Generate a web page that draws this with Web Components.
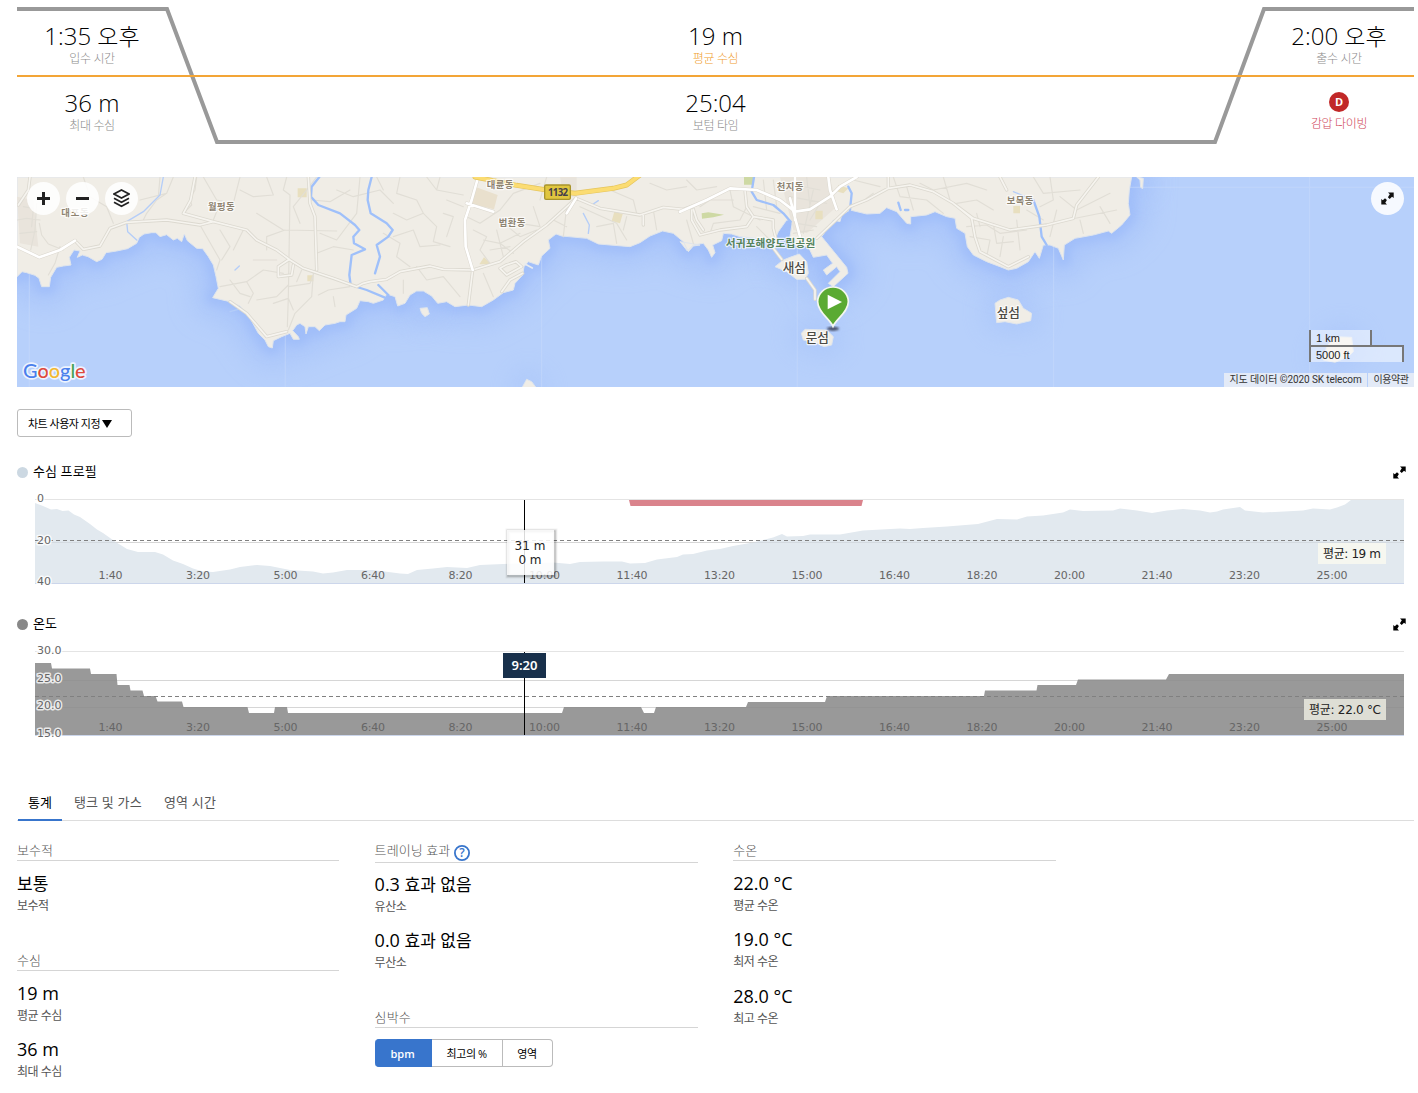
<!DOCTYPE html>
<html lang="ko">
<head>
    <meta charset="UTF-8">
    <meta name="viewport" content="width=device-width, initial-scale=1.0">
    <title>Web Component: Dive Activity</title>
    <style>
        body {
            margin: 0;
            background: #fff;
            color: #000;
            font-family: "Open Sans", "Noto Sans CJK KR", sans-serif;
        }
    </style>
</head>
<body>
    <dive-page>
        <dive-summary>
            <summary-value slot="start" value="1:35 오후" label="입수 시간"></summary-value>
            <summary-value slot="average" value="19 m" label="평균 수심" tone="accent"></summary-value>
            <summary-value slot="end" value="2:00 오후" label="출수 시간"></summary-value>
            <summary-value slot="max" value="36 m" label="최대 수심"></summary-value>
            <summary-value slot="bottom" value="25:04" label="보텀 타임"></summary-value>
            <summary-value slot="type" badge="D" label="감압 다이빙" tone="deco"></summary-value>
        </dive-summary>
        <dive-map></dive-map>
        <menu-button>차트 사용자 지정</menu-button>
        <dive-chart kind="depth">수심 프로필</dive-chart>
        <dive-chart kind="temperature">온도</dive-chart>
        <tab-bar>
            <tab-item active>통계</tab-item>
            <tab-item>탱크 및 가스</tab-item>
            <tab-item>영역 시간</tab-item>
        </tab-bar>
        <stat-columns>
            <stat-column>
                <stat-group heading="보수적">
                    <stat-item value="보통" label="보수적"></stat-item>
                </stat-group>
                <stat-group heading="수심">
                    <stat-item value="19 m" label="평균 수심"></stat-item>
                    <stat-item value="36 m" label="최대 수심"></stat-item>
                </stat-group>
            </stat-column>
            <stat-column>
                <stat-group heading="트레이닝 효과" help>
                    <stat-item value="0.3 효과 없음" label="유산소"></stat-item>
                    <stat-item value="0.0 효과 없음" label="무산소"></stat-item>
                </stat-group>
                <stat-group heading="심박수">
                    <button-group options="bpm,최고의 %,영역"></button-group>
                </stat-group>
            </stat-column>
            <stat-column>
                <stat-group heading="수온">
                    <stat-item value="22.0 °C" label="평균 수온"></stat-item>
                    <stat-item value="19.0 °C" label="최저 수온"></stat-item>
                    <stat-item value="28.0 °C" label="최고 수온"></stat-item>
                </stat-group>
            </stat-column>
        </stat-columns>
    </dive-page>

    <script>
        // Wraps every run of Hangul, so it can be sized apart from the digits
        const hangul = (text) => text.replace(/[가-힣]+(?: [가-힣]+)*/g, '<span class="ko">$&</span>');

        /**
         * Page frame: stacks the sections.
         */
        class DivePage extends HTMLElement {
            constructor() {
                super();
                this.attachShadow({ mode: 'open' }).innerHTML = `
                    <style>
                        :host {
                            display: flex;
                            flex-direction: column;
                            box-sizing: border-box;
                            height: 1093px;
                            padding: 7px 4px 0 17px;
                            overflow: hidden;
                        }
                        ::slotted(*) { flex: none; }
                    </style>
                    <slot></slot>
                `;
            }
        }
        customElements.define('dive-page', DivePage);

        /**
         * One value with its caption in the summary header.
         */
        class SummaryValue extends HTMLElement {
            constructor() {
                super();
                this.attachShadow({ mode: 'open' });
            }

            connectedCallback() {
                const badge = this.getAttribute('badge');
                this.shadowRoot.innerHTML = `
                    <style>
                        :host { display: flex; flex-direction: column; align-items: center; }
                        .value {
                            margin-top: 11px;
                            height: 32px;
                            font-size: 24px;
                            line-height: 32px;
                            font-weight: 300;
                            white-space: nowrap;
                        }
                        .value .ko { font-size: 23px; }
                        .label {
                            height: 16px;
                            margin-top: -1px;
                            font-size: 12px;
                            line-height: 16px;
                            font-weight: 200;
                            letter-spacing: -0.35px;
                            color: #8c8c8c;
                        }
                        .badge {
                            width: 20px;
                            height: 20px;
                            margin: 16px 0 5px;
                            border-radius: 50%;
                            background: #c12828;
                            color: #fff;
                            font-size: 11px;
                            line-height: 20px;
                            font-weight: 700;
                            text-align: center;
                        }
                        :host([tone="accent"]) .label { color: #f0a030; }
                        :host([tone="deco"]) .label { color: #cf4558; }
                    </style>
                    ${badge ? `<div class="badge">${badge}</div>` : `<div class="value">${hangul(this.getAttribute('value'))}</div>`}
                    <div class="label">${this.getAttribute('label')}</div>
                `;
            }
        }
        customElements.define('summary-value', SummaryValue);

        /**
         * Summary header with the dive outline behind the values.
         */
        class DiveSummary extends HTMLElement {
            constructor() {
                super();
                this.attachShadow({ mode: 'open' }).innerHTML = `
                    <style>
                        :host { display: block; position: relative; height: 137px; margin-bottom: 33px; }
                        svg { position: absolute; left: 0; top: 0; }
                        .grid {
                            position: relative;
                            display: grid;
                            grid-template-columns: 150px 1fr 150px;
                            grid-template-rows: 67px 67px;
                            padding-top: 2px;
                        }
                    </style>
                    <svg width="1397" height="137" fill="none">
                        <path d="M0 2H150L200 135H1198L1247 2H1397" stroke="#999" stroke-width="4"/>
                        <path d="M0 69H1397" stroke="#f3a536" stroke-width="2"/>
                    </svg>
                    <div class="grid">
                        <slot name="start"></slot>
                        <slot name="average"></slot>
                        <slot name="end"></slot>
                        <slot name="max"></slot>
                        <slot name="bottom"></slot>
                        <slot name="type"></slot>
                    </div>
                `;
            }
        }
        customElements.define('dive-summary', DiveSummary);

        /**
         * Icons shared by the map controls and the charts.
         */
        const ICONS = {
            plus: '<path d="M5 0h3v5h5v3H8v5H5V8H0V5h5z"/>',
            minus: '<path d="M0 5h13v3H0z"/>',
            layers: '<path d="M8.500 1L16 5 8.500 9 1 5zM1 9.200l7.500 4 7.500-4M1 13.200l7.500 4 7.500-4" fill="none" stroke="currentColor" stroke-width="1.700"/>',
            expand: '<path d="M7 .500H12.700V6L11 4.700 8.700 7 6.900 5.200 8.800 2.200zM.300 7l1.500 1.200L4 6.200 5.900 8 4.300 10.700 6 12.500H.300z"/>',
        };

        class AppIcon extends HTMLElement {
            constructor() {
                super();
                this.attachShadow({ mode: 'open' });
            }

            connectedCallback() {
                const name = this.getAttribute('name');
                const size = name === 'layers' ? [17, 19] : [13, 13];
                this.shadowRoot.innerHTML = `
                    <style>
                        :host { display: inline-flex; }
                        svg { display: block; }
                    </style>
                    <svg width="${size[0]}" height="${size[1]}" fill="currentColor">${ICONS[name]}</svg>
                `;
            }
        }
        customElements.define('app-icon', AppIcon);

        /**
         * Round map control button.
         */
        class MapControl extends HTMLElement {
            constructor() {
                super();
                this.attachShadow({ mode: 'open' });
            }

            connectedCallback() {
                this.shadowRoot.innerHTML = `
                    <style>
                        :host {
                            display: flex;
                            align-items: center;
                            justify-content: center;
                            width: 33px;
                            height: 33px;
                            border-radius: 50%;
                            background: rgba(255, 255, 255, 0.87);
                            color: #222;
                        }
                    </style>
                    <app-icon name="${this.getAttribute('icon')}"></app-icon>
                `;
            }
        }
        customElements.define('map-control', MapControl);

        // Map geometry, three units to a pixel
        const COAST = `M51 21V320L66 305 80 308 105 316 117 325 125 350 148 350 152 322 170 292 190 288 213 285 208 262 222 240
            240 243 232 262 247 255 264 260 290 275 306 268 318 248 350 243 383 236 410 220 418 202 432 192 455 188 468 188 480 200
            500 194 520 210 532 205 545 215 553 192 562 212 590 235 608 236 625 260 640 285 648 320 655 355 638 383
            690 395 720 408 745 435 775 490 795 510 805 530 817 534 820 512 845 500 870 490 880 508 898 508 895 500 878 482 890 465
            900 460 915 470 918 492 925 470 945 470 958 482 975 465 1005 460 1020 455 1035 455 1038 435 1070 415 1080 392 1105 395 1120 400 1150 390
            1160 372 1185 380 1193 408 1215 400 1230 375 1250 363 1270 363 1295 378 1313 400 1340 395 1365 410 1405 405 1445 410
            1480 390 1510 368 1540 360 1545 340 1568 315 1572 290 1585 275 1615 285 1625 258 1650 235 1645 210 1668 192 1685 198 1760 205
            1795 222 1890 230 1920 218 1950 198 1988 183 2020 190 2050 215 2065 245 2080 228 2100 225 2040 215 2062 243 2080 225
            2110 220 2125 240 2135 262 2145 248 2138 225 2165 212 2170 190 2195 192 2220 200 2270 205 2322 215 2335 185 2360 150
            2378 150 2370 200 2385 225 2425 230 2440 262 2480 255 2498 280 2470 300 2480 315 2510 290 2520 305 2485 340
            2500 350 2544 310 2540 292 2465 200 2500 150 2520 155 2525 135 2550 120 2600 132 2640 130 2660 113 2690 125 2720 160
            2732 162 2732 140 2780 135 2805 125 2840 140 2865 145 2870 175 2895 190 2902 230 2920 255 2960 275 3000 290
            3025 300 3050 295 3085 275 3105 245 3118 265 3130 225 3150 225 3175 235 3190 270 3193 225 3225 205 3280 195
            3325 183 3335 190 3365 165 3390 135 3385 100 3388 60 3395 21Z`;

        const ISLANDS = `M2325 290L2350 270 2370 262 2398 252 2420 275 2425 310 2415 328 2390 328 2360 305Z
            M2404 490L2415 478 2480 480 2500 500 2495 525 2472 530 2450 520 2410 510Z
            M2985 400L3000 390 3025 382 3055 390 3070 415 3095 430 3092 452 3050 462 3015 455 2990 458Z
            M1260 415L1282 413 1288 432 1275 440 1265 430Z
            M1565 655L1580 628 1595 635 1610 655Z
            M3970 570L3980 530 4005 500 4055 502 4060 545 4045 560 4005 577Z
            M3410 21L3430 25 3428 56 3422 52 3420 30Z`;

        const STREETS = `M118 160L125 195 145 222 190 240M110 100L105 180 92 240M52 150L80 145 120 150M180 230L165 280 145 315M60 190L110 185M70 110L100 115 95 170
            M480 21L475 80M250 21L270 80 320 110 340 160M520 21L500 70 470 90 440 130 430 150M590 21L585 60 570 85 575 105 550 130M420 90L500 70
            M610 21L650 90 700 100 720 21M720 60L760 80 820 75 800 21M640 150L660 100M600 165L620 200 660 270 650 300M660 180L690 230 665 270
            M730 180L700 240M860 21L850 60 870 75 865 380 862 470M770 130L850 180 1010 183M950 21L920 60 880 110 900 160M800 240L800 200 855 180
            M760 270L830 270M660 350L740 335 790 300 850 310M690 330L720 370 750 380M740 335L760 370 745 400M865 345L830 380 770 390M820 400L865 385 880 420M865 350L930 340 945 300
            M890 335L905 300M940 310L935 380 885 430 865 480M955 375L985 360 1050 350M1000 380L1005 410M950 250L1000 230 1060 240M960 190L1010 210 1070 130 1080 21M935 90L990 95 1050 60
            M1010 60L1060 80 1140 60 1180 100M1130 21L1150 60M1200 21L1190 70 1250 90 1270 130 1220 150 1180 130M1280 21L1310 60 1390 75M1320 21L1310 60M1340 90L1390 110
            M1180 200L1240 180 1260 230 1320 225M1150 190L1200 220 1190 260 1230 290M1270 130L1310 170 1300 215 1350 230M1330 130L1360 140 1340 200M1210 330L1210 370M1250 290L1280 330 1330 320 1380 380
            M1420 180L1460 200 1440 240 1470 280M1400 140L1440 160 1500 120 1540 70 1620 40M1450 210L1500 220 1540 250M1490 180L1510 260M1470 240L1530 230M1560 160L1620 170M1500 150L1560 200 1610 180M1600 110L1620 170
            M1500 220L1560 190M1450 310L1480 380M1620 90L1640 21M1700 110L1690 200M1740 110L1850 160 1880 210M1660 150L1700 170M1790 170L1840 160 1850 220M1880 140L1870 180M1830 60L1900 90 1910 130M1950 40L2000 60 2060 50M1960 120L1970 180
            M2060 30L2090 60 2150 50M2100 110L2130 90 2200 90M2130 190L2140 160 2220 150 2240 110M2190 60L2200 110 2280 150M2260 110L2340 130M2270 170L2310 210M2060 150L2080 220
            M2290 30L2300 120M2320 30L2330 110M2360 40L2460 60M2370 80L2480 100M2380 21L2390 120M2420 21L2430 110M2440 60L2410 190M2390 160L2450 170M2380 190L2440 180M2460 100L2430 150
            M2560 30L2640 50M2580 100L2620 70M2680 21L2700 80 2780 90 2830 130M2720 50L2740 120M2760 40L2800 60 2900 40 2960 60M2830 21L2850 90M2870 100L2930 90 2980 120M2900 170L2960 165 3000 190 3080 180
            M2910 200L2970 210 2960 260M2980 160L2990 220 3040 215M3010 200L3000 260M3050 150L3060 240M2930 130L2940 170M3100 21L3130 70 3240 60M3150 21L3160 90 3120 110M3180 80L3230 120 3330 70M3150 200L3170 120M3240 150L3250 190M3300 110L3330 160M3080 120L3130 150M3200 150L3350 120`;

        const ROADS = `M90 21L85 60 55 105M225 212L250 238 300 228 330 175 380 157 500 150 600 165 640 155 740 180 770 210 830 240 870 270 910 295 1000 325 1070 350 1090 340 1110 335 1160 328 1200 305 1290 288 1330 298 1418 300 1500 275 1570 215 1640 165 1728 85 1800 115 1920 135 1990 112 2050 118 2100 100
            M640 155L550 130 572 90 585 21M925 21L930 100 945 140 950 300M690 395L740 430 800 500 860 485M1418 300L1405 405M1518 285L1500 295 1520 315 1565 290 1548 275 1518 285M1568 310L1530 330 1505 365M865 270L835 290 835 320 875 315 880 285
            M2075 120L2075 150 2100 195 2160 180 2240 170 2260 140 2320 150 2320 175 2330 215 2320 235 2345 268M2235 60L2240 110 2260 140M2450 205L2550 110 2600 90 2665 55 2730 45 2800 65 2860 100 2920 145 3030 180 3140 165 3220 145 3230 105 3295 21
            M2860 100L2915 145 2925 200 2940 245 3025 290 3085 260M3000 21L3020 60M1930 135L1930 165M2080 118L2090 150 2110 180M2665 21V55M2420 325L2445 360V388`;

        const MAIN_ROADS = `M51 230L118 262 180 240 225 212M1432 30L1415 90 1395 150 1397 230 1418 300M1400 100L1480 125M1728 85L1700 130
            M2040 125L2120 90 2190 55 2270 60 2340 90 2385 125 2430 118 2490 80 2520 50 2570 21M2385 21V150M2485 21L2490 60 2510 118M2370 85L2400 200`;

        const RIVERS = `M958 21L935 50 933 80 955 105 1020 130 1065 165 1078 180 1060 200 1062 220 1095 238 1055 255 1048 315 1052 345 1100 360 1155 383
            M1115 21L1105 60 1103 90 1112 130 1160 160 1178 180 1165 200 1130 225 1140 260 1125 310M1135 345L1165 375
            M2262 21L2255 65 2270 90 2320 105 2350 130 2372 155
            M2545 50L2555 70 2550 120M2695 98L2702 120M2715 120H2725M3100 90L3118 140 3125 200 3140 225`;

        const STREAMS = 'M490 21L480 75 430 125 380 155 383 185 410 210M3040 65L3100 90M1750 130L1768 165 1765 190M1775 105L1795 92M690 425L715 418M705 300L718 288';

        /**
         * Map of the dive site with its controls, scale and attribution.
         */
        class DiveMap extends HTMLElement {
            constructor() {
                super();
                this.attachShadow({ mode: 'open' });
                this.render();
            }

            renderPlace(x, y, name, color, size, length) {
                const weight = size > 32 ? 500 : 700;
                return `<text x="${x}" y="${y}" fill="${color}" font-size="${size}" font-weight="${weight}" textLength="${length}">${name}</text>`;
            }

            render() {
                this.shadowRoot.innerHTML = `
                    <style>
                        :host { display: block; position: relative; height: 210px; margin-bottom: 22px; overflow: hidden; }
                        svg.map { display: block; }
                        .places text {
                            font-family: "Noto Sans CJK KR", sans-serif;
                            paint-order: stroke;
                            stroke: #fff;
                            stroke-opacity: 0.75;
                            stroke-width: 7px;
                            stroke-linejoin: round;
                        }
                        .controls { position: absolute; left: 10px; top: 5px; display: flex; gap: 6px; }
                        .expand { position: absolute; right: 10px; top: 5px; }
                        .expand map-control { color: #111; }
                        .scale {
                            position: absolute;
                            right: 10px;
                            bottom: 25px;
                            width: 95px;
                            font: 11px/16px "Liberation Sans", sans-serif;
                            color: #222;
                        }
                        .scale div {
                            box-sizing: border-box;
                            height: 16px;
                            padding-left: 5px;
                            border: solid #777;
                            border-width: 0 2px;
                            background: rgba(255, 255, 255, 0.5);
                        }
                        .scale .km { width: 63px; height: 15px; }
                        .scale .ft { height: 17px; border-top-width: 2px; }
                        .legal {
                            position: absolute;
                            right: 0;
                            bottom: 0;
                            display: flex;
                            gap: 1px;
                            height: 14px;
                            font: 10px/14px Roboto, "Noto Sans CJK KR", sans-serif;
                            letter-spacing: -0.1px;
                            color: #333;
                        }
                        .legal span { box-sizing: border-box; background: rgba(245, 245, 245, 0.7); text-align: center; white-space: nowrap; }
                        .legal .data { width: 143px; }
                        .legal .terms { width: 46px; letter-spacing: -0.4px; }
                    </style>
                    <svg class="map" width="1397" height="210" viewBox="51 21 4191 630">
                        <defs>
                            <filter id="near" x="-5%" y="-20%" width="110%" height="150%"><feGaussianBlur stdDeviation="14"/></filter>
                            <filter id="far" x="-5%" y="-20%" width="110%" height="150%"><feGaussianBlur stdDeviation="38"/></filter>
                            <filter id="soft"><feGaussianBlur stdDeviation="3"/></filter>
                        </defs>
                        <rect x="51" y="21" width="4191" height="630" fill="#b7d0fb"/>
                        <g fill="none" stroke="#a0bef9" stroke-linejoin="round">
                            <path d="${COAST}" stroke-width="120" opacity="0.55" filter="url(#far)"/>
                            <path d="${COAST}" stroke-width="38" filter="url(#near)"/>
                            <path d="${ISLANDS}" stroke-width="60" opacity="0.45" filter="url(#far)"/>
                        </g>
                        <path d="M88 21V651M856 21V651M1625 21V651M2392 21V651M3161 21V651M3929 21V651M51 52H4242" stroke="#c6d9fb" stroke-width="3" opacity="0.6"/>
                        <g fill="#f0ede6" stroke="#dfe5ed" stroke-width="3" stroke-linejoin="round">
                            <path d="${COAST}"/>
                            <path d="${ISLANDS}"/>
                        </g>
                        <g fill="#e9e4dc">
                            <path d="M51 80L100 90 115 230 60 220ZM2340 21H2490L2510 110 2420 190 2380 180ZM1680 21H1730V80H1690Z"/>
                        </g>
                        <g fill="#e8dfbf">
                            <path d="M893 55H920V82H893ZM922 316H940V334H922ZM1438 283L1452 262 1475 283ZM1843 125L1868 132 1860 160 1835 153ZM2514 45L2545 55 2530 70 2514 65ZM2446 122H2468V148H2446ZM3040 108H3060V130H3040Z"/>
                            <path d="M1425 50L1493 75 1482 118 1408 100Z" fill="#e9e0cd"/>
                            <path d="M2105 130L2125 127 2172 134 2140 142 2106 146ZM2232 21H2262V44H2232Z" fill="#ced9a4"/>
                        </g>
                        <g fill="none" stroke-linejoin="round" stroke-linecap="round">
                            <path d="${STREETS}" stroke="#e1ded6" stroke-width="3.500"/>
                            <path d="${STREAMS}" stroke="#b4cdf8" stroke-width="4"/>
                            <path d="${RIVERS}" stroke="#9fc0fa" stroke-width="7"/>
                            <path d="${ROADS}" stroke="#dcd9d0" stroke-width="10"/>
                            <path d="${ROADS}" stroke="#f6f4ef" stroke-width="5"/>
                            <path d="${MAIN_ROADS}" stroke="#dcd8cf" stroke-width="11"/>
                            <path d="${MAIN_ROADS}" stroke="#fff" stroke-width="8"/>
                            <path d="M1425 21L1550 46 1640 60 1725 70 1840 55 1880 45 1920 15" stroke="#e5c55c" stroke-width="15"/>
                            <path d="M1425 21L1550 46 1640 60 1725 70 1840 55 1880 45 1920 15" stroke="#fbdc72" stroke-width="11"/>
                            <path d="M1575 282L1597 294" stroke="#e8ebef" stroke-width="5"/>
                        </g>
                        <rect x="1634" y="45" width="77" height="43" rx="4" fill="#e0c63e" stroke="#a8942c" stroke-width="4"/>
                        <text x="1644" y="77" font-family="Noto Sans" font-size="29" font-weight="700" fill="#46404a" textLength="60">1132</text>
                        <g class="places">
                            ${this.renderPlace(184, 138, '대포동', '#8d8371', 28, 82)}
                            ${this.renderPlace(624, 121, '월평동', '#8d8371', 28, 80)}
                            ${this.renderPlace(1460, 55, '대륜동', '#8d8371', 28, 80)}
                            ${this.renderPlace(1496, 167, '법환동', '#8d8371', 28, 80)}
                            ${this.renderPlace(2330, 61, '천지동', '#8d8371', 28, 80)}
                            ${this.renderPlace(3020, 101, '보목동', '#8d8371', 28, 80)}
                            ${this.renderPlace(2177, 231, '서귀포해양도립공원', '#55825c', 32, 269)}
                            ${this.renderPlace(2348, 305, '새섬', '#4c4a44', 38, 70)}
                            ${this.renderPlace(2417, 515, '문섬', '#4c4a44', 38, 70)}
                            ${this.renderPlace(2990, 440, '섶섬', '#4c4a44', 38, 70)}
                        </g>
                        <ellipse cx="2499" cy="476" rx="18" ry="6" fill="#223" opacity="0.75" filter="url(#soft)"/>
                        <path d="M2499 469C2490 448 2453 426 2453 395a46 44 0 0 1 92 0C2545 426 2508 448 2499 469Z" fill="#5aaa32" stroke="#f4f7f0" stroke-width="5"/>
                        <path d="M2483 374V418L2526 396Z" fill="#fff"/>
                        <text x="69" y="625" font-family="Lato" font-size="60" font-weight="500" textLength="188" paint-order="stroke" stroke="#fff" stroke-opacity="0.75" stroke-width="10" stroke-linejoin="round"><tspan fill="#4a80ec">G</tspan><tspan fill="#de4a3d">o</tspan><tspan fill="#f3b92f">o</tspan><tspan fill="#4a80ec">g</tspan><tspan fill="#45a355">l</tspan><tspan fill="#de4a3d">e</tspan></text>
                    </svg>
                    <div class="controls">
                        <map-control icon="plus"></map-control>
                        <map-control icon="minus"></map-control>
                        <map-control icon="layers"></map-control>
                    </div>
                    <div class="expand"><map-control icon="expand"></map-control></div>
                    <div class="scale">
                        <div class="km">1 km</div>
                        <div class="ft">5000 ft</div>
                    </div>
                    <div class="legal">
                        <span class="data">지도 데이터 ©2020 SK telecom</span>
                        <span class="terms">이용약관</span>
                    </div>
                `;
            }
        }
        customElements.define('dive-map', DiveMap);

        /**
         * Dropdown button above the charts.
         */
        class MenuButton extends HTMLElement {
            constructor() {
                super();
                this.attachShadow({ mode: 'open' }).innerHTML = `
                    <style>
                        :host { display: block; margin-bottom: 23px; }
                        button {
                            display: flex;
                            align-items: center;
                            gap: 2px;
                            width: 115px;
                            height: 28px;
                            padding: 0 0 0 10px;
                            border: 1px solid #bbb;
                            border-radius: 3px;
                            background: #fff;
                            color: #000;
                            font-family: inherit;
                            font-size: 11px;
                            letter-spacing: -0.5px;
                            white-space: nowrap;
                        }
                        svg { margin-top: 2px; }
                    </style>
                    <button><slot></slot><svg width="10" height="8"><path d="M0 0H10L5 8Z"/></svg></button>
                `;
            }
        }
        customElements.define('menu-button', MenuButton);

        // Series are drawn in plot pixels: x from the left edge, y from the top grid line
        const SERIES = {
            depth: {
                dot: '#ccd8e2',
                fill: '#e2e9ef',
                grid: [0, 43],
                average: 41,
                points: `0,4 8,7 16,10.500 22,10 27.500,12 33.500,11.500 39,15.500 45,18 55,25 62,30.500 68,34 80,42.500 92,50 103,53 120,53 128,55.500 138,61.500 148,65
                    158,69.500 168,72.500 178,73 195,70.500 205,68 222,66 235,67 255,71 278,72.500 288,74.500 298,73.500 312,71 338,71 365,74.500 373,75 382,71 398,69.500 412,68
                    432,69 445,66 468,65 518,63.500 535,65 545,63 568,62.500 587,62.500 595,64.500 610,64 622,60.500 642,58 648,55.500 658,55 672,51.500 685,50 698,47 718,43.500
                    738,38.500 747,35 752,37.500 768,37 775,35.500 805,35.500 828,31.500 865,29.500 875,30 888,29 912,27.500 943,25 962,20 982,20.500 992,17.500 1008,16.500 1028,13.500
                    1035,10.500 1048,12 1078,11.500 1085,9.500 1102,11.500 1117,14 1132,11.500 1148,10 1165,11.500 1175,13.500 1182,12.500 1188,10.500 1205,8 1210,11.500 1228,13.500
                    1268,11.500 1278,9.500 1295,10.500 1302,8.500 1310,5.500 1316,1 1369,1`,
                labels: [['0', 3], ['20', 45], ['40', 86]],
                note: '평균: 19 m',
                noteBox: [1283, 44, 68, 21],
                noteFill: '#f6f7f0',
            },
            temperature: {
                dot: '#888',
                fill: '#999',
                grid: [0, 29, 56],
                average: 45,
                points: `0,12 16,12 17,17.500 55,17.500 56,23 81.500,23 82.500,34 94.500,34 95.500,39.500 107.500,39.500 109,45 120.500,45 122.500,50.500 147,50.500 148.500,56
                    212.500,56 214,62 239,62 240,56 252,56 253,62 527,62 529,56 606,56 609,62 619,62 621,56 711,56 713,51 790,51 792,45 949,45 950,39.500 1001.500,39.500
                    1002.500,34 1041,34 1043,28.500 1131,28.500 1134,23 1369,23`,
                labels: [['30.0', 3], ['25.0', 31], ['20.0', 58], ['15.0', 86]],
                note: '평균: 22.0 °C',
                noteBox: [1269, 48, 82, 21],
                noteFill: '#deded5',
            },
        };

        const TIMES = ['1:40', '3:20', '5:00', '6:40', '8:20', '10:00', '11:40', '13:20', '15:00', '16:40', '18:20', '20:00', '21:40', '23:20', '25:00'];

        /**
         * Area chart with a title, an average line and the hover cursor.
         */
        class DiveChart extends HTMLElement {
            constructor() {
                super();
                this.attachShadow({ mode: 'open' });
            }

            connectedCallback() {
                this.render();
            }

            renderTime(time, index) {
                const short = time.length === 4;
                return `<text class="x" x="${(short ? 75.5 : 72) + index * 87.5}" y="80" textLength="${short ? 24 : 31}">${time}</text>`;
            }

            renderCursor(kind) {
                if (kind === 'depth') {
                    return `
                        <path d="M594 1H828L826.500 7H595.500Z" fill="#da838c"/>
                        <path d="M489.500 1V84" stroke="#000"/>
                        <g class="box">
                            <g fill="none" stroke="#000">
                                <rect x="473" y="32" width="47" height="45" stroke-opacity="0.05" stroke-width="5"/>
                                <rect x="473" y="32" width="47" height="45" stroke-opacity="0.1" stroke-width="3"/>
                                <rect x="473" y="32" width="47" height="45" stroke-opacity="0.15"/>
                            </g>
                            <rect x="472" y="31" width="47" height="45" fill="#fff" fill-opacity="0.85"/>
                            <text x="495" y="51">31 m</text>
                            <text x="495" y="65">0 m</text>
                        </g>
                    `;
                }
                return `
                    <path d="M489.500 1V84" stroke="#000"/>
                    <rect x="468" y="2" width="43" height="25" fill="#18304b"/>
                    <text class="time" x="489.500" y="19">9:20</text>
                `;
            }

            render() {
                const kind = this.getAttribute('kind');
                const series = SERIES[kind];
                const [x, y, width, height] = series.noteBox;

                this.shadowRoot.innerHTML = `
                    <style>
                        :host { display: block; height: 152px; }
                        header {
                            display: flex;
                            align-items: center;
                            height: 25px;
                            padding-right: 8px;
                            font-size: 13px;
                            line-height: 23px;
                        }
                        i { width: 11px; height: 11px; border-radius: 50%; background: ${series.dot}; margin-right: 5px; }
                        .title { flex: 1; height: 25px; letter-spacing: 0.1px; }
                        svg { display: block; margin: 7px 0 0 18px; overflow: visible; }
                        text { font: 11px "DejaVu Sans", "Noto Sans CJK KR", sans-serif; fill: #666; }
                        .x { text-anchor: middle; }
                        .y { paint-order: stroke; stroke: #fff; stroke-opacity: 0.8; stroke-width: 3px; stroke-linejoin: round; }
                        .box text, .note text { font-size: 12px; fill: #222; text-anchor: middle; }
                        .time { font: 600 13px "Noto Sans", sans-serif; fill: #fff; text-anchor: middle; }
                    </style>
                    <header><i></i><span class="title"><slot></slot></span><app-icon name="expand"></app-icon></header>
                    <svg width="1369" height="100" viewBox="0 -7 1369 100">
                        ${series.grid.map(line => `<path d="M0 ${line + 0.5}H1369" stroke="#e4e4e4"/>`).join('')}
                        <polygon points="0,84 ${series.points} 1369,84" fill="${series.fill}"/>
                        ${series.grid.slice(1).map(line => `<path d="M0 ${line + 0.5}H1369" stroke="#777" stroke-opacity="0.12"/>`).join('')}
                        <path d="M0 84.500H1369" stroke="#ccd6eb"/>
                        <path d="M0 ${series.average + 0.5}H1369" stroke="#808080" stroke-dasharray="4 3"/>
                        ${TIMES.map(this.renderTime).join('')}
                        ${series.labels.map(([text, top]) => `<text class="y" x="2" y="${top}">${text}</text>`).join('')}
                        <g class="note">
                            <rect x="${x}" y="${y}" width="${width}" height="${height}" fill="${series.noteFill}"/>
                            <text x="${x + width / 2}" y="${y + 15}" textLength="${width - 10}">${series.note}</text>
                        </g>
                        ${this.renderCursor(kind)}
                    </svg>
                `;
            }
        }
        customElements.define('dive-chart', DiveChart);

        /**
         * Tabs.
         */
        class TabBar extends HTMLElement {
            constructor() {
                super();
                this.attachShadow({ mode: 'open' }).innerHTML = `
                    <style>
                        :host {
                            display: flex;
                            height: 34px;
                            margin: 22px 0 0;
                            padding-left: 1px;
                            border-bottom: 1px solid #ddd;
                        }
                    </style>
                    <slot></slot>
                `;
            }
        }
        customElements.define('tab-bar', TabBar);

        class TabItem extends HTMLElement {
            constructor() {
                super();
                this.attachShadow({ mode: 'open' }).innerHTML = `
                    <style>
                        :host {
                            display: block;
                            box-sizing: border-box;
                            height: 35px;
                            margin-right: 2px;
                            padding: 0 10px;
                            font-size: 13px;
                            line-height: 33px;
                            letter-spacing: 0.2px;
                            color: #555;
                        }
                        :host([active]) { border-bottom: 2px solid #3875cc; color: #000; letter-spacing: 0; }
                    </style>
                    <slot></slot>
                `;
            }
        }
        customElements.define('tab-item', TabItem);

        /**
         * Statistics grid.
         */
        class StatColumns extends HTMLElement {
            constructor() {
                super();
                this.attachShadow({ mode: 'open' }).innerHTML = `
                    <style>
                        :host {
                            display: grid;
                            grid-template-columns: 322px 323px 323px;
                            column-gap: 35.6px;
                            padding-top: 19px;
                        }
                    </style>
                    <slot></slot>
                `;
            }
        }
        customElements.define('stat-columns', StatColumns);

        class StatColumn extends HTMLElement {
            constructor() {
                super();
                this.attachShadow({ mode: 'open' }).innerHTML = `
                    <style>
                        :host { display: flex; flex-direction: column; gap: 22.6px; }
                    </style>
                    <slot></slot>
                `;
            }
        }
        customElements.define('stat-column', StatColumn);

        class StatGroup extends HTMLElement {
            constructor() {
                super();
                this.attachShadow({ mode: 'open' });
            }

            connectedCallback() {
                this.shadowRoot.innerHTML = `
                    <style>
                        :host { display: block; }
                        header {
                            display: flex;
                            height: 20px;
                            margin-bottom: 10px;
                            border-bottom: 1px solid #d5d5d5;
                            font-size: 13px;
                            line-height: 21px;
                            font-weight: 300;
                            letter-spacing: 0.1px;
                            color: #555;
                        }
                        :host([help]) header { height: 22px; margin-bottom: 9.2px; }
                        svg { margin: 5px 0 0 4px; }
                        svg text { font: 600 12px "Open Sans", sans-serif; letter-spacing: 0; }
                    </style>
                    <header>${this.getAttribute('heading')}${this.hasAttribute('help') ? `
                        <svg width="16" height="16">
                            <circle cx="8" cy="8" r="7.100" fill="none" stroke="#3875cc" stroke-width="1.800"/>
                            <text x="8" y="12.300" text-anchor="middle" fill="#3875cc">?</text>
                        </svg>` : ''}</header>
                    <slot></slot>
                `;
            }
        }
        customElements.define('stat-group', StatGroup);

        class StatItem extends HTMLElement {
            constructor() {
                super();
                this.attachShadow({ mode: 'open' });
            }

            connectedCallback() {
                this.shadowRoot.innerHTML = `
                    <style>
                        :host { display: block; height: 56.3px; }
                        .value { height: 25px; font-size: 18px; line-height: 25px; }
                        .value .ko { font-size: 17px; }
                        .label { height: 16px; margin-top: 2px; font-size: 12px; line-height: 16px; letter-spacing: -0.5px; color: #555; }
                    </style>
                    <div class="value">${hangul(this.getAttribute('value'))}</div>
                    <div class="label">${this.getAttribute('label')}</div>
                `;
            }
        }
        customElements.define('stat-item', StatItem);

        /**
         * Segmented button group, the first option is selected.
         */
        class ButtonGroup extends HTMLElement {
            constructor() {
                super();
                this.attachShadow({ mode: 'open' });
            }

            connectedCallback() {
                this.shadowRoot.innerHTML = `
                    <style>
                        :host { display: flex; padding-top: 1px; }
                        button {
                            box-sizing: border-box;
                            width: 71px;
                            height: 28px;
                            padding: 0;
                            border: 1px solid #bbb;
                            border-left-width: 0;
                            background: #fff;
                            color: #000;
                            font-family: inherit;
                            font-size: 11px;
                            letter-spacing: -0.4px;
                        }
                        button:first-of-type {
                            width: 57px;
                            border-color: #3875cc;
                            border-radius: 4px 0 0 4px;
                            background: #3875cc;
                            color: #fff;
                            font-weight: 600;
                            letter-spacing: 0;
                        }
                        button:last-of-type { width: 50px; border-radius: 0 4px 4px 0; }
                    </style>
                    ${this.getAttribute('options').split(',').map(option => `<button>${option}</button>`).join('')}
                `;
            }
        }
        customElements.define('button-group', ButtonGroup);
    </script>
</body>
</html>
